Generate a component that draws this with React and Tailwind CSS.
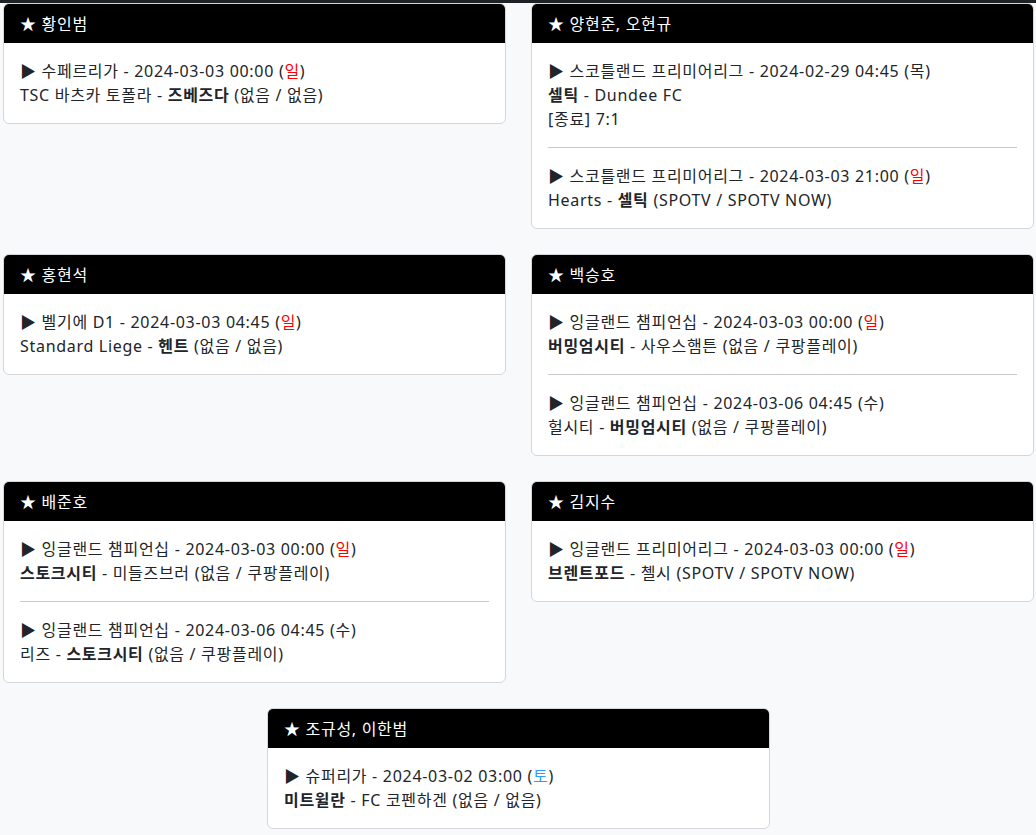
import React from 'react';

// Match data per player group
const groups = [
    {
        title: '황인범',
        matches: [
            {
                league: '수페르리가',
                date: '2024-03-03 00:00',
                day: '일',
                home: 'TSC 바츠카 토폴라',
                away: '즈베즈다',
                bold: 'away',
                tv: '(없음 / 없음)'
            }
        ]
    },
    {
        title: '양현준, 오현규',
        matches: [
            {
                league: '스코틀랜드 프리미어리그',
                date: '2024-02-29 04:45',
                day: '목',
                home: '셀틱',
                away: 'Dundee FC',
                bold: 'home',
                result: '[종료] 7:1'
            },
            {
                league: '스코틀랜드 프리미어리그',
                date: '2024-03-03 21:00',
                day: '일',
                home: 'Hearts',
                away: '셀틱',
                bold: 'away',
                tv: '(SPOTV / SPOTV NOW)'
            }
        ]
    },
    {
        title: '홍현석',
        matches: [
            {
                league: '벨기에 D1',
                date: '2024-03-03 04:45',
                day: '일',
                home: 'Standard Liege',
                away: '헨트',
                bold: 'away',
                tv: '(없음 / 없음)'
            }
        ]
    },
    {
        title: '백승호',
        matches: [
            {
                league: '잉글랜드 챔피언십',
                date: '2024-03-03 00:00',
                day: '일',
                home: '버밍엄시티',
                away: '사우스햄튼',
                bold: 'home',
                tv: '(없음 / 쿠팡플레이)'
            },
            {
                league: '잉글랜드 챔피언십',
                date: '2024-03-06 04:45',
                day: '수',
                home: '헐시티',
                away: '버밍엄시티',
                bold: 'away',
                tv: '(없음 / 쿠팡플레이)'
            }
        ]
    },
    {
        title: '배준호',
        matches: [
            {
                league: '잉글랜드 챔피언십',
                date: '2024-03-03 00:00',
                day: '일',
                home: '스토크시티',
                away: '미들즈브러',
                bold: 'home',
                tv: '(없음 / 쿠팡플레이)'
            },
            {
                league: '잉글랜드 챔피언십',
                date: '2024-03-06 04:45',
                day: '수',
                home: '리즈',
                away: '스토크시티',
                bold: 'away',
                tv: '(없음 / 쿠팡플레이)'
            }
        ]
    },
    {
        title: '김지수',
        matches: [
            {
                league: '잉글랜드 프리미어리그',
                date: '2024-03-03 00:00',
                day: '일',
                home: '브렌트포드',
                away: '첼시',
                bold: 'home',
                tv: '(SPOTV / SPOTV NOW)'
            }
        ]
    },
    {
        title: '조규성, 이한범',
        matches: [
            {
                league: '슈퍼리가',
                date: '2024-03-02 03:00',
                day: '토',
                home: '미트윌란',
                away: 'FC 코펜하겐',
                bold: 'home',
                tv: '(없음 / 없음)'
            }
        ]
    }
];

const Day = ({ day }) => {
    if (day === '일') return <span className="text-[#ff0000]">{day}</span>;
    if (day === '토') return <span className="text-[#3399ff]">{day}</span>;
    return <span>{day}</span>;
};

const Match = ({ m }) => (
    <div>
        <div className="h-6">
            ▶ {m.league} - {m.date} (<Day day={m.day} />)
        </div>
        <div className="h-6">
            {m.bold === 'home' ? <b className="font-bold">{m.home}</b> : m.home}
            {' - '}
            {m.bold === 'away' ? <b className="font-bold">{m.away}</b> : m.away}
            {m.tv && <> {m.tv}</>}
        </div>
        {m.result && <div className="h-6">{m.result}</div>}
    </div>
);

const PlayerCard = ({ group }) => (
    <div className="w-[503px] bg-white border border-[#d4d6d9] rounded-[6px] overflow-hidden">
        <div className="bg-black text-white px-4 h-[39px] flex items-center">
            ★ {group.title}
        </div>
        <div className="p-4">
            {group.matches.map((m, i) => (
                <React.Fragment key={i}>
                    {i > 0 && <hr className="my-4 border-t border-[#c8c8c8]" />}
                    <Match m={m} />
                </React.Fragment>
            ))}
        </div>
    </div>
);

export default function App() {
    return (
        <div
            className="min-h-screen bg-[#f8f9fa] text-[#212529] text-base leading-6 tracking-[0.7px]"
            style={{ fontFamily: '"Noto Sans", "Noto Sans CJK KR", sans-serif' }}
        >
            <div className="h-[3px] bg-[#1e2125]" />
            <div className="flex flex-wrap justify-center items-start gap-x-[25px] gap-y-[25px] pl-[3px] pr-[2px]">
                {groups.map((g) => (
                    <PlayerCard key={g.title} group={g} />
                ))}
            </div>
        </div>
    );
}
